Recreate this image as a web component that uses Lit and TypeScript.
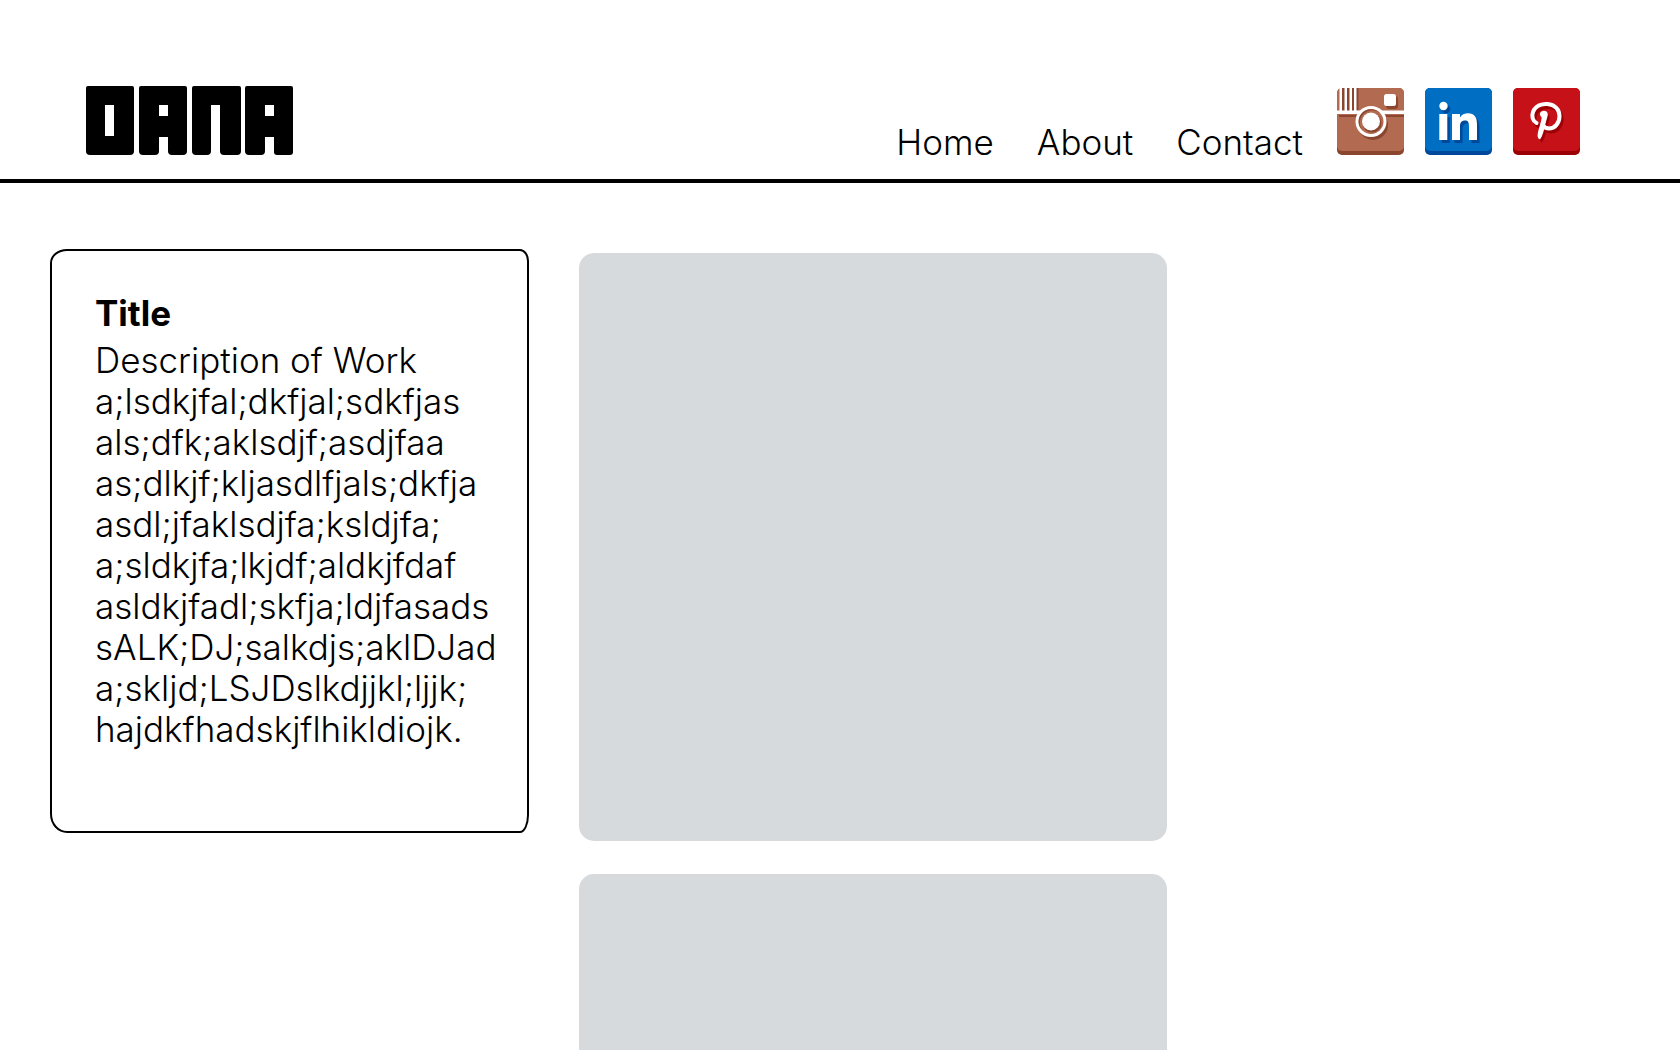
import { LitElement, html, css, svg } from "lit";
import { customElement } from "lit/decorators.js";

const INSTAGRAM = svg`
  <rect width="67" height="67" rx="5" fill="#8b4630"></rect>
  <rect width="67" height="63" rx="5" fill="#b26b50"></rect>
  <path d="M5 0h3v25h-3zM10 0h3v25h-3zM15 0h2.500v25h-2.500zM19 0h2.500v22h-2.500z" fill="#8b4630"></path>
  <path d="M2 27H20v2H2zM47 27H67v2H47z" fill="#8b4630"></path>
  <rect x="49" y="8" width="12" height="13" rx="3" fill="#8b4630"></rect>
  <circle cx="36" cy="37" r="15" fill="#8b4630"></circle>
  <path d="M0 22.500H67V26H0zM2.500 0h2.500v25h-2.500zM7.500 0h2.500v25h-2.500zM12.500 0h2.500v25h-2.500zM17 0h2.500v25h-2.500z" fill="#fff"></path>
  <rect x="47" y="6" width="12" height="12" rx="2.500" fill="#fff"></rect>
  <circle cx="34" cy="33.500" r="15.500" fill="#fff"></circle>
  <circle cx="34" cy="33.500" r="12.500" fill="#b26b50"></circle>
  <path d="M25 25a12.500 12.500 0 0 1 18 0a12.500 12.500 0 0 0-18 17a12.500 12.500 0 0 1 0-17z" fill="#8b4630"></path>
  <circle cx="35" cy="35" r="9.500" fill="#8b4630"></circle>
  <circle cx="34" cy="33.500" r="9" fill="#fff"></circle>`;

const inMark = svg`
  <circle cx="18.500" cy="18" r="4.200"></circle>
  <path d="M14.300 26h8v26h-8zM27 26h8v3.500c1.800-2.800 4.500-4.200 8-4.200 6.500 0 9 4 9 11V52h-8V38c0-3.500-1-5.500-4-5.500-3.300 0-5 2.200-5 5.500v14h-8z"></path>`;

const LINKEDIN = svg`
  <rect width="67" height="67" rx="5" fill="#00489a"></rect>
  <rect width="67" height="63" rx="5" fill="#006ec2"></rect>
  <g fill="#00489a" transform="translate(2.500 3)">${inMark}</g>
  <g fill="#fff">${inMark}</g>`;

const pinMark = svg`
  <path d="M23.500 35C19.500 33 18.500 28 20 24 22.500 17.500 29 15.500 34.500 16c7.500.6 12 5.500 12 12 0 7-4.500 12.500-10.500 12.500-3 0-5-1.300-6.500-3.500" fill="none" stroke-width="4" stroke-linecap="round"></path>
  <path d="M27 25.500c.8-3.600 7.500-4 7.800.7 0 1.800-1.300 5.300-2.300 9.300-1.500 6-2.500 12-5.500 16-1.800-.5-2.800-2.500-2.300-5.500.8-5 3.800-13 4-16.500-.8-1-2.100-2.500-1.700-4z" stroke="none"></path>`;

const PINTEREST = svg`
  <rect width="67" height="67" rx="5" fill="#9a0004"></rect>
  <rect width="67" height="63" rx="5" fill="#c61118"></rect>
  <g stroke="#9a0004" fill="#9a0004" transform="translate(2 3)">${pinMark}</g>
  <g stroke="#fff" fill="#fff">${pinMark}</g>`;

const SOCIAL = [
  { name: "Instagram", art: INSTAGRAM },
  { name: "LinkedIn", art: LINKEDIN },
  { name: "Pinterest", art: PINTEREST },
];

const LINES = [
  "Description of Work",
  "a;lsdkjfal;dkfjal;sdkfjas",
  "als;dfk;aklsdjf;asdjfaa",
  "as;dlkjf;kljasdlfjals;dkfja",
  "asdl;jfaklsdjfa;ksldjfa;",
  "a;sldkjfa;lkjdf;aldkjfdaf",
  "asldkjfadl;skfja;ldjfasads",
  "sALK;DJ;salkdjs;aklDJad",
  "a;skljd;LSJDslkdjjkl;ljjk;",
  "hajdkfhadskjflhikldiojk.",
];

@customElement("site-header")
class SiteHeader extends LitElement {
  static styles = css`
    :host { display: block; }
    .bar {
      display: flex;
      align-items: flex-end;
      justify-content: space-between;
      padding: 86px 100px 24px 86px;
      border-bottom: 4px solid #000;
    }
    .logo { display: block; }
    .logo svg, .social svg { display: block; }
    .right { display: flex; align-items: flex-end; gap: 34px; }
    .links { display: flex; gap: 43px; }
    .links a {
      color: #000;
      text-decoration: none;
      font-size: 35px;
      line-height: 25px;
      font-weight: 300;
    }
    .social { display: flex; gap: 21px; }
  `;

  render() {
    return html`
      <header class="bar">
        <a class="logo" href="#" aria-label="Dana">
          <svg width="207" height="69" viewBox="0 0 207 69">
            <rect width="48" height="60" rx="2"></rect>
            <rect y="20" width="48" height="49" rx="4"></rect>
            <rect x="53" width="48" height="51" rx="2"></rect>
            <rect x="53" y="30" width="20" height="39" rx="4"></rect>
            <rect x="82" y="30" width="19" height="39" rx="4"></rect>
            <rect x="106" width="49" height="19" rx="2"></rect>
            <rect x="106" y="8" width="19" height="61" rx="4"></rect>
            <rect x="134" y="8" width="21" height="61" rx="4"></rect>
            <rect x="159" width="48" height="51" rx="2"></rect>
            <rect x="159" y="30" width="20" height="39" rx="4"></rect>
            <rect x="188" y="30" width="19" height="39" rx="3"></rect>
            <g fill="#fff">
              <rect x="19" y="19" width="9" height="31"></rect>
              <rect x="73" y="19" width="9" height="11"></rect>
              <rect x="179" y="19" width="9" height="11"></rect>
            </g>
          </svg>
        </a>
        <div class="right">
          <nav class="links">
            <a href="#home">Home</a>
            <a href="#about">About</a>
            <a href="#contact">Contact</a>
          </nav>
          <div class="social">
            ${SOCIAL.map(
              (s) => html`<a href="#${s.name}" aria-label=${s.name}>
                <svg width="67" height="67" viewBox="0 0 67 67">${s.art}</svg>
              </a>`
            )}
          </div>
        </div>
      </header>
    `;
  }
}

@customElement("app-root")
class AppRoot extends LitElement {
  static styles = css`
    :host {
      display: block;
      height: 100vh;
      overflow-y: auto;
      scrollbar-width: none;
      background: #fff;
      color: #000;
      font-family: Inter, "Open Sans", sans-serif;
    }
    .content {
      display: grid;
      grid-template-columns: 479fr 588fr 413fr;
      align-items: start;
      gap: 50px;
      padding: 66px 50px;
    }
    .card {
      border: 2px solid #000;
      border-radius: 17px 9px 9px 17px / 14px 12px 18px 19px;
      padding: 42px 0 81px 43px;
    }
    .title { margin: 0 0 6px; font-size: 35px; line-height: 41px; font-weight: 700; }
    .text { margin: 0; font-size: 35px; line-height: 41px; font-weight: 300; }
    .gallery { display: grid; gap: 33px; padding-top: 4px; }
    .tile { aspect-ratio: 1; border-radius: 15px; background: #d6dadd; }
  `;

  render() {
    return html`
      <site-header></site-header>
      <main class="content">
        <article class="card">
          <h1 class="title">Title</h1>
          <p class="text">${LINES.map((l, i) => (i ? html`<br />${l}` : l))}</p>
        </article>
        <section class="gallery" aria-label="Gallery">
          <div class="tile"></div>
          <div class="tile"></div>
        </section>
      </main>
    `;
  }
}
